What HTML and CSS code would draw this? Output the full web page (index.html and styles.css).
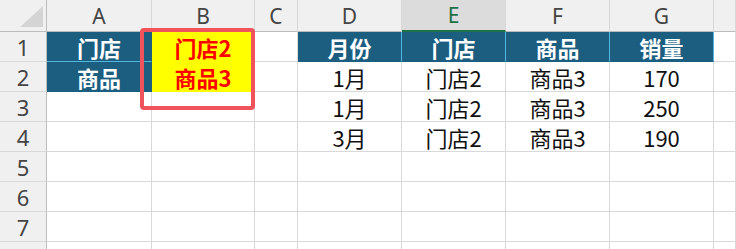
FILE: index.html
```html
<!DOCTYPE html>
<html lang="zh-CN">
<head>
  <meta charset="UTF-8" />
  <meta name="viewport" content="width=device-width, initial-scale=1.0"/>
  <title>销量表</title>
  <link rel="stylesheet" href="styles.css">
</head>
<body>

  <div class="sheet">
    <div class="grid">
      <!-- column headers -->
      <div class="corner"><span class="corner-mark"></span></div>
      <div class="col-head">A</div>
      <div class="col-head">B</div>
      <div class="col-head">C</div>
      <div class="col-head">D</div>
      <div class="col-head selected">E</div>
      <div class="col-head">F</div>
      <div class="col-head">G</div>
      <div class="col-head"></div>

      <!-- row 1 -->
      <div class="row-head">1</div>
      <div class="cell blue split-bottom">门店</div>
      <div class="cell yellow">门店2</div>
      <div class="cell"></div>
      <div class="cell blue split-right">月份</div>
      <div class="cell blue split-right">门店</div>
      <div class="cell blue split-right">商品</div>
      <div class="cell blue split-right">销量</div>
      <div class="cell"></div>

      <!-- row 2 -->
      <div class="row-head">2</div>
      <div class="cell blue">商品</div>
      <div class="cell yellow">商品3</div>
      <div class="cell"></div>
      <div class="cell">1月</div>
      <div class="cell">门店2</div>
      <div class="cell">商品3</div>
      <div class="cell">170</div>
      <div class="cell"></div>

      <!-- row 3 -->
      <div class="row-head">3</div>
      <div class="cell"></div>
      <div class="cell"></div>
      <div class="cell"></div>
      <div class="cell">1月</div>
      <div class="cell">门店2</div>
      <div class="cell">商品3</div>
      <div class="cell">250</div>
      <div class="cell"></div>

      <!-- row 4 -->
      <div class="row-head">4</div>
      <div class="cell"></div>
      <div class="cell"></div>
      <div class="cell"></div>
      <div class="cell">3月</div>
      <div class="cell">门店2</div>
      <div class="cell">商品3</div>
      <div class="cell">190</div>
      <div class="cell"></div>

      <!-- empty rows -->
      <div class="row-head">5</div>
      <div class="cell"></div><div class="cell"></div><div class="cell"></div><div class="cell"></div>
      <div class="cell"></div><div class="cell"></div><div class="cell"></div><div class="cell"></div>

      <div class="row-head">6</div>
      <div class="cell"></div><div class="cell"></div><div class="cell"></div><div class="cell"></div>
      <div class="cell"></div><div class="cell"></div><div class="cell"></div><div class="cell"></div>

      <div class="row-head">7</div>
      <div class="cell"></div><div class="cell"></div><div class="cell"></div><div class="cell"></div>
      <div class="cell"></div><div class="cell"></div><div class="cell"></div><div class="cell"></div>

      <div class="row-head last">8</div>
      <div class="cell"></div><div class="cell"></div><div class="cell"></div><div class="cell"></div>
      <div class="cell"></div><div class="cell"></div><div class="cell"></div><div class="cell"></div>
    </div>

    <!-- highlight around B1:B2 -->
    <div class="highlight"></div>
  </div>

</body>
</html>
```

FILE: styles.css
```css
/* RESET & BASE */
* {
  box-sizing: border-box;
  margin: 0;
  padding: 0;
}

body {
  font-family: "Noto Sans CJK SC", "Noto Sans", sans-serif;
  background: #fff;
  overflow: hidden;
}

/* SHEET */
.sheet {
  position: relative;
  width: 736px;
  height: 249px;
  overflow: hidden;
}

.grid {
  display: grid;
  grid-template-columns: 47px 105px 103px 43px 104px 104px 104px 104px 1fr;
  grid-template-rows: 32px repeat(8, 30px);
}

.grid > div {
  border-right: 1px solid #d9d9d9;
  border-bottom: 1px solid #d9d9d9;
  display: flex;
  align-items: center;
  justify-content: center;
  line-height: 1;
}

/* HEADERS */
.corner,
.col-head {
  background: #f0f0f0;
  border-bottom-color: #bcbcbc !important;
}

.corner {
  position: relative;
  border-right-color: #bcbcbc !important;
}

.corner-mark {
  position: absolute;
  right: 3px;
  bottom: 4px;
  width: 23px;
  height: 21px;
  background: #d4d4d4;
  clip-path: polygon(100% 0, 100% 100%, 0 100%);
}

.col-head {
  font-family: "Noto Sans", sans-serif;
  font-size: 21px;
  color: #444;
  padding-top: 1px;
}

.col-head.selected {
  background: #dcdcdc;
  color: #1e7145;
  border-bottom: 2px solid #1e7145 !important;
}

.row-head {
  background: #f0f0f0;
  border-right-color: #bcbcbc !important;
  font-family: "Noto Sans", sans-serif;
  font-size: 22px;
  color: #444;
}

.row-head.last {
  align-items: flex-start;
  padding-top: 5px;
}

/* CELLS */
.cell {
  font-size: 22px;
  color: #111;
  padding-top: 1px;
}

.cell.blue {
  background: #1b5e7f;
  border-color: #1b5e7f !important;
  color: #fff;
  font-weight: bold;
}

.cell.blue.split-bottom {
  border-bottom-color: #52b6de !important;
}

.cell.blue.split-right {
  border-right-color: #52b6de !important;
}

.cell.yellow {
  background: #ffff00;
  border-color: #ffff00 !important;
  color: #ff0000;
  font-weight: bold;
}

/* outline drawn over B1:B2 */
.highlight {
  position: absolute;
  left: 140px;
  top: 28px;
  width: 115px;
  height: 82px;
  border: 4px solid #f0535b;
  border-radius: 4px;
}
```
